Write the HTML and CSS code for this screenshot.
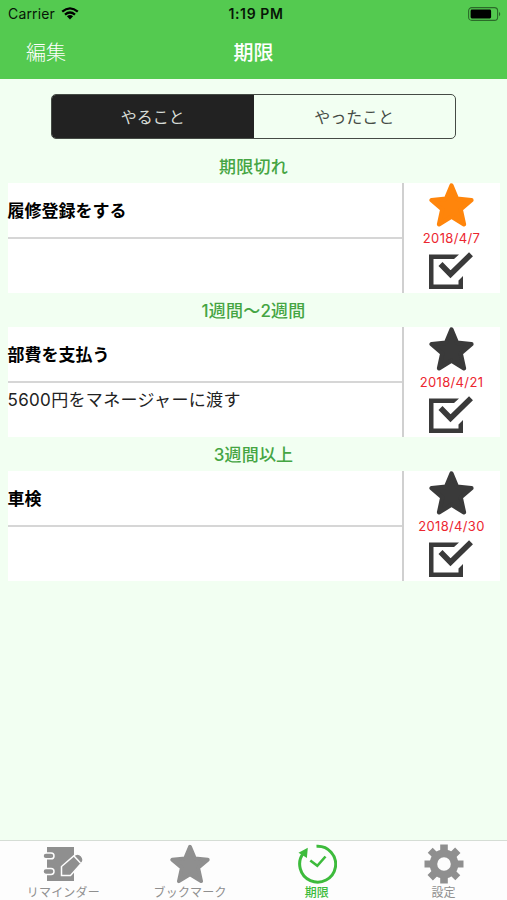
FILE: index.html
```html
<!DOCTYPE html>
<html lang="ja">
<head>
<meta charset="utf-8">
<title>期限</title>
<link rel="stylesheet" href="styles.css">
</head>
<body>
<svg class="defs" width="0" height="0" aria-hidden="true">
  <symbol id="star" viewBox="0 0 44 43">
    <path d="M22 2.500L27.400 15.400L41.500 16.800L31 25.700L34.200 40.400L22 33L9.800 40.400L13 25.700L2.500 16.800L16.600 15.400Z" fill="currentColor" stroke="currentColor" stroke-width="4.200" stroke-linejoin="round"/>
  </symbol>
  <symbol id="check" viewBox="0 0 45 38">
    <path d="M30 2.500H0V37H34V24L29.500 28.500V32.500H4.500V7H25Z" fill="currentColor"/>
    <path d="M11.500 12L21.500 22.200L42 2.300" fill="none" stroke="currentColor" stroke-width="5.600"/>
  </symbol>
</svg>
<div class="screen">
  <header class="top">
    <div class="status">
      <div class="carrier">Carrier
        <svg width="18" height="13" viewBox="0 0 18 13" fill="none" stroke="#000" stroke-width="2.300">
          <path d="M1.200 4.700Q9 -1.900 16.800 4.700M4 7.600Q9 3.400 14 7.600"/>
          <path d="M9 12.400L5.900 9.300Q9 6.900 12.100 9.300Z" fill="#000" stroke="none"/>
        </svg>
      </div>
      <div class="time">1:19 PM</div>
      <svg class="battery" width="33" height="14" viewBox="0 0 33 14">
        <rect x=".6" y=".6" width="29" height="12.800" rx="3.200" fill="none" stroke="#2b6a29" stroke-width="1.100"/>
        <rect x="2.600" y="2.600" width="20.500" height="8.800" rx="1.300" fill="#000"/>
        <path d="M31 4.700Q33.500 7 31 9.300Z" fill="#2b6a29"/>
      </svg>
    </div>
    <nav class="navbar"><span class="edit">編集</span><h1>期限</h1><span></span></nav>
  </header>
  <main>
    <div class="segments"><div class="segment on">やること</div><div class="segment">やったこと</div></div>
    <section>
      <h2>期限切れ</h2>
      <article class="card">
        <div class="text"><h3>履修登録をする</h3><p></p></div>
        <div class="side"><svg class="star marked"><use href="#star"/></svg><time>2018/4/7</time><svg class="check"><use href="#check"/></svg></div>
      </article>
    </section>
    <section>
      <h2>1週間〜2週間</h2>
      <article class="card">
        <div class="text"><h3>部費を支払う</h3><p>5600円をマネージャーに渡す</p></div>
        <div class="side"><svg class="star"><use href="#star"/></svg><time>2018/4/21</time><svg class="check"><use href="#check"/></svg></div>
      </article>
    </section>
    <section>
      <h2>3週間以上</h2>
      <article class="card">
        <div class="text"><h3>車検</h3><p></p></div>
        <div class="side"><svg class="star"><use href="#star"/></svg><time>2018/4/30</time><svg class="check"><use href="#check"/></svg></div>
      </article>
    </section>
  </main>
  <footer class="tabs">
    <div class="tab">
      <svg viewBox="0 0 40 40">
        <path d="M4 3H31V37H4Z" fill="currentColor"/>
        <g fill="currentColor" stroke="#fdfdfd" stroke-width="1.500">
          <rect x="0" y="9" width="11" height="5.800" rx="2.900"/>
          <rect x="0" y="24.600" width="11" height="5.800" rx="2.900"/>
          <path d="M18.500 31.500V22.500L32.500 10.500Q35.500 9 38.500 12Q41 15 39.500 18L27.500 31.500Z"/>
          <path d="M31 12L37.500 19"/>
        </g>
      </svg>
      <span>リマインダー</span>
    </div>
    <div class="tab"><svg viewBox="0 0 44 43"><use href="#star" width="44" height="43"/></svg><span>ブックマーク</span></div>
    <div class="tab active">
      <svg viewBox="0 0 40 40">
        <path d="M19.500 2.200A18 18 0 1 1 6.400 9.200" fill="none" stroke="currentColor" stroke-width="3"/>
        <path d="M1.500 8.800L10.800 3.800L9.900 14Z" fill="currentColor"/>
        <path d="M13.300 16.500L20.300 21.800L28.500 12.500" fill="none" stroke="currentColor" stroke-width="2.600"/>
      </svg>
      <span>期限</span>
    </div>
    <div class="tab">
      <svg viewBox="-20 -20 40 40">
        <g fill="currentColor">
          <path id="teeth" d="M-3.800 -19.500H3.800V-12H-3.800ZM-3.800 12H3.800V19.500H-3.800ZM-19.500 -3.500H-12V3.500H-19.500ZM12 -3.500H19.500V3.500H12Z"/>
          <use href="#teeth" transform="rotate(45)"/>
        </g>
        <circle r="10.600" fill="none" stroke="currentColor" stroke-width="7.600"/>
      </svg>
      <span>設定</span>
    </div>
  </footer>
</div>
</body>
</html>
```
FILE: styles.css
```css
* { box-sizing: border-box; }
body { margin: 0; font-family: Inter, "Noto Sans CJK JP", sans-serif; background: #f2fff2; }
h1, h2, h3, p { margin: 0; }
svg { display: block; flex: none; }
.defs { position: absolute; }
.screen { width: 507px; height: 900px; display: flex; flex-direction: column; overflow: hidden; }
.top { height: 79px; background: #54ca50; }
.status { height: 27px; display: grid; grid-template-columns: 1fr auto 1fr; align-items: center; padding: 0 6px 0 8px; font-size: 14px; line-height: 27px; color: #071507; }
.carrier { display: flex; align-items: center; gap: 6px; letter-spacing: .15px; }
.time { padding-left: 3px; font-weight: 600; font-size: 14px; letter-spacing: .6px; }
.battery { justify-self: end; }
.navbar { height: 52px; display: grid; grid-template-columns: 1fr auto 1fr; align-items: center; padding: 0 26px; color: #fff; line-height: 52px; }
.edit { font-size: 20px; font-weight: 300; }
h1 { font-size: 20px; font-weight: 500; }
main { flex: 1; padding: 15px 7.5px 0; }
.segments { display: flex; width: 405px; height: 45px; margin: 0 auto 10px 43.5px; border: 1.500px solid #454b45; border-radius: 5px; overflow: hidden; }
.segment { flex: 1; font-size: 16px; line-height: 45px; text-align: center; color: #454b45; }
.segment.on { background: #222; color: #d8ddd8; }
h2 { height: 34px; font-size: 17px; font-weight: 500; line-height: 36px; text-align: center; letter-spacing: .2px; color: #45a543; }
.card { display: flex; height: 110px; background: #fff; }
.text { flex: 1; }
h3 { height: 56px; border-bottom: 2px solid #d6d6d6; font-size: 17px; font-weight: 700; line-height: 57px; }
.text p { font-size: 17px; line-height: 34px; letter-spacing: .34px; color: #222; white-space: nowrap; }
.side { width: 98px; border-left: 2px solid #d0d0d0; display: flex; flex-direction: column; align-items: center; color: #3a3a3a; }
.star { width: 45px; height: 44px; }
.marked { color: #ff850b; }
time { height: 22px; font-size: 13px; line-height: 22px; letter-spacing: .35px; color: #ec2630; }
.check { width: 45px; height: 38px; margin-top: 3px; }
.tabs { height: 60px; display: grid; grid-template-columns: repeat(4, 1fr); background: #fdfdfd; border-top: 1px solid #d5ddd5; }
.tab { display: flex; flex-direction: column; align-items: center; padding-top: 3px; font-size: 12px; line-height: 17px; letter-spacing: .2px; color: #8f8f8f; }
.tab svg { width: 40px; height: 40px; }
.active { color: #3dbb3c; font-weight: 500; }
```
